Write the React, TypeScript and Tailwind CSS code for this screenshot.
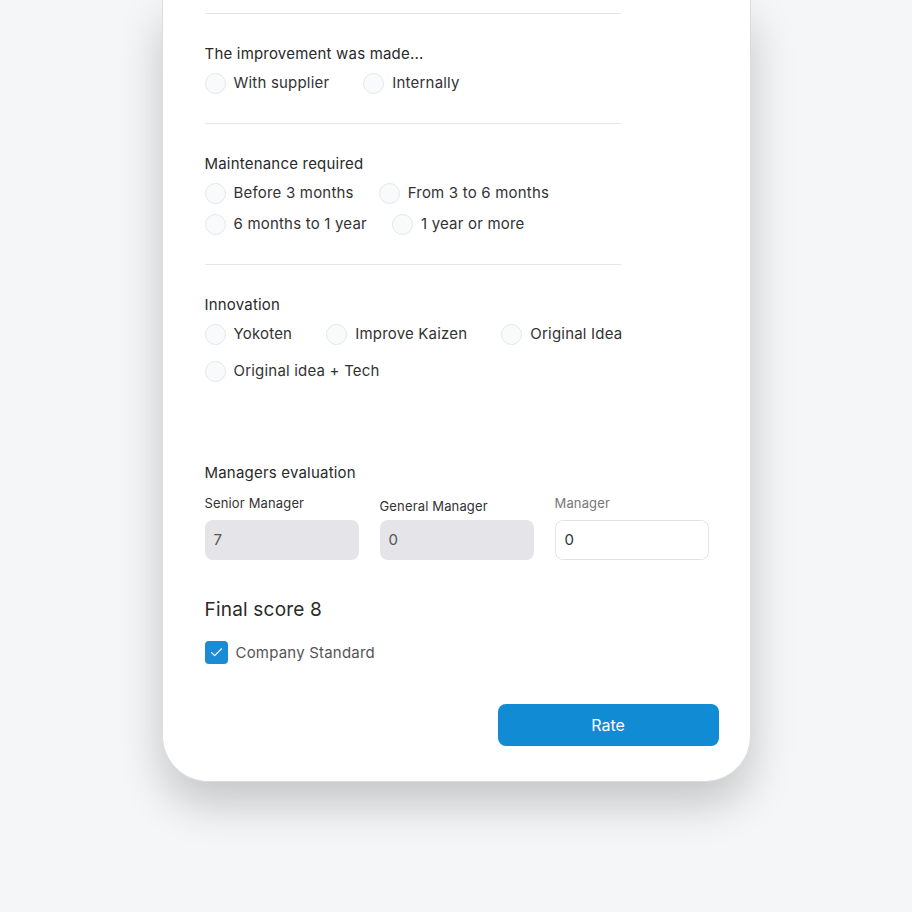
import { Check } from 'lucide-react'

type RadioGroupProps = {
  title: string
  options: string[]
  gapX: string
  gapY: string
}

const Radio = ({ label }: { label: string }) => (
  <label className="flex h-[22px] items-center gap-[8px]">
    <span className="h-[21px] w-[21px] shrink-0 rounded-full border border-[#e4e6eb] bg-[#f9fafc]" />
    <span className="text-[15px] leading-5 tracking-[0.2px] text-[#333]">{label}</span>
  </label>
)

const RadioGroup = ({ title, options, gapX, gapY }: RadioGroupProps) => (
  <div className="flex flex-col">
    <div className="text-[15px] leading-5 tracking-[0.2px] text-[#2a2a2a]">{title}</div>
    <div className={`mt-[8px] flex flex-wrap ${gapX} ${gapY}`}>
      {options.map((o) => (
        <Radio key={o} label={o} />
      ))}
    </div>
  </div>
)

const Divider = () => <div className="h-px w-[416px] bg-[#e6e6e9]" />

const ScoreInput = ({ label, value, disabled, offset }: { label: string; value: string; disabled?: boolean; offset?: boolean }) => (
  <div className="flex flex-col">
    <div
      className={`text-[13px] leading-[18px] tracking-[0.15px] ${disabled ? 'text-[#333]' : 'text-[#777]'} ${offset ? 'mt-[3px] mb-[5px]' : 'mb-[8px]'}`}
    >
      {label}
    </div>
    <div
      className={`flex h-[40px] items-center rounded-[8px] px-[9px] text-[15px] ${
        disabled ? 'bg-[#e4e4e9] text-[#555]' : 'border border-[#e2e2e6] bg-white text-[#333]'
      }`}
    >
      {value}
    </div>
  </div>
)

export default function App() {
  return (
    <div className="min-h-[912px] bg-[#f5f6f8] font-['Inter',sans-serif]">
      <div className="mx-auto w-[589px] rounded-b-[46px] border-x border-b border-[#dcdce0] bg-white px-[42px] pt-[13px] pb-[35px] shadow-[0_22px_45px_rgba(0,0,0,0.2)]">
        <Divider />
        <div className="pt-[30px] pb-[29px]">
          <RadioGroup title="The improvement was made..." options={['With supplier', 'Internally']} gapX="gap-x-[34px]" gapY="gap-y-[9px]" />
        </div>
        <Divider />
        <div className="pt-[30px] pb-[29px]">
          <RadioGroup
            title="Maintenance required"
            options={['Before 3 months', 'From 3 to 6 months', '6 months to 1 year', '1 year or more']}
            gapX="gap-x-[25px]"
            gapY="gap-y-[9px]"
          />
        </div>
        <Divider />
        <div className="w-[430px] pt-[30px]">
          <RadioGroup
            title="Innovation"
            options={['Yokoten', 'Improve Kaizen', 'Original Idea', 'Original idea + Tech']}
            gapX="gap-x-[34px]"
            gapY="gap-y-[15px]"
          />
        </div>

        <div className="mt-[81px] text-[15px] leading-5 tracking-[0.2px] text-[#2a2a2a]">Managers evaluation</div>
        <div className="mt-[11px] grid w-[504px] grid-cols-3 gap-x-[21px]">
          <ScoreInput label="Senior Manager" value="7" disabled />
          <ScoreInput label="General Manager" value="0" disabled offset />
          <ScoreInput label="Manager" value="0" />
        </div>

        <div className="mt-[37px] text-[19px] leading-[26px] tracking-[0.2px] text-[#2a2a2a]">Final score 8</div>
        <div className="mt-[18px] flex items-center gap-[8px]">
          <span className="flex h-[23px] w-[23px] items-center justify-center rounded-[4px] bg-[#1a8bd4]">
            <Check className="h-[15px] w-[15px] text-white" strokeWidth={1.8} />
          </span>
          <span className="text-[15px] leading-5 tracking-[0.2px] text-[#555]">Company Standard</span>
        </div>

        <div className="mt-[40px] flex justify-end">
          <button className="mr-[-11px] h-[42px] w-[221px] rounded-[8px] bg-[#118bd3] text-[16px] text-white">Rate</button>
        </div>
      </div>
    </div>
  )
}
